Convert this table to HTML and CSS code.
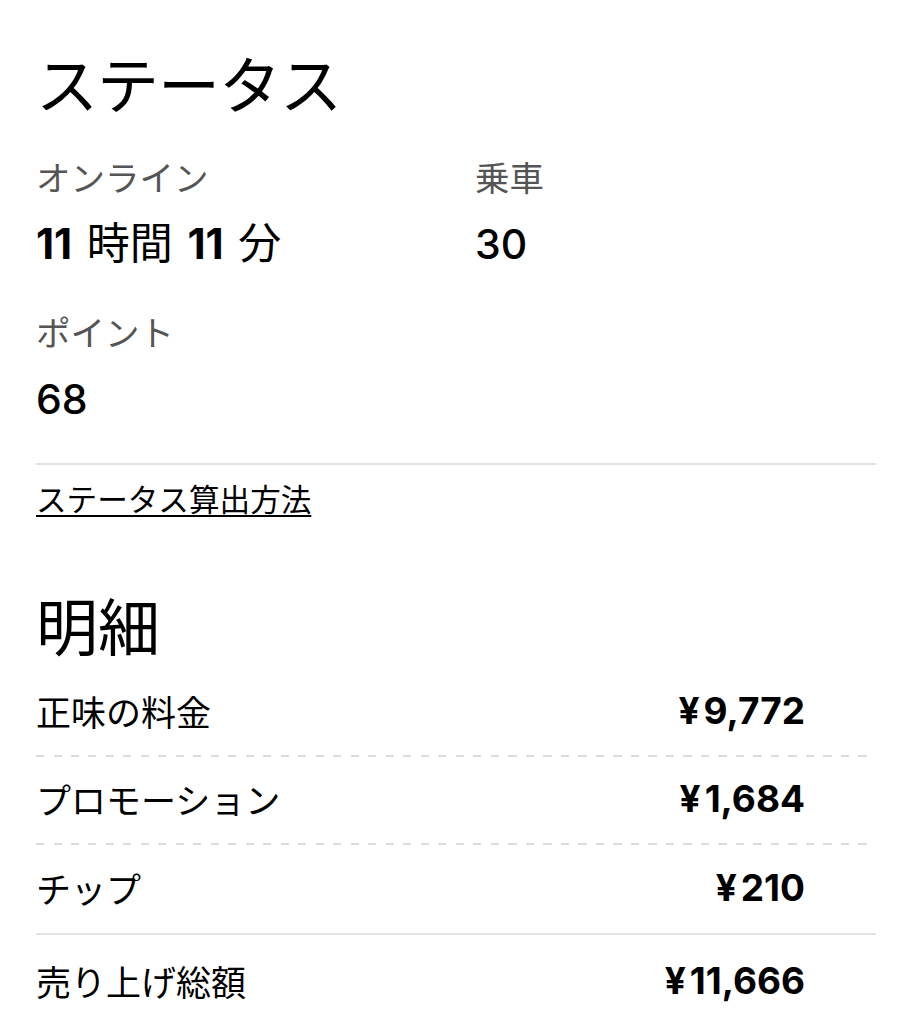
FILE: index.html
```html
<!DOCTYPE html>
<html lang="ja">
<head>
<meta charset="utf-8">
<link rel="stylesheet" href="styles.css">
</head>
<body>
<main class="page">
  <section class="status">
    <h1 class="title">ステータス</h1>
    <div class="stats">
      <div class="stat">
        <div class="label">オンライン</div>
        <div class="value"><span class="num">11</span> 時間 <span class="num">11</span> 分</div>
      </div>
      <div class="stat">
        <div class="label">乗車</div>
        <div class="value"><span class="num light">30</span></div>
      </div>
      <div class="stat">
        <div class="label">ポイント</div>
        <div class="value"><span class="num light">68</span></div>
      </div>
    </div>
    <div class="rule"></div>
    <a class="link" href="#">ステータス算出方法</a>
  </section>
  <section class="details">
    <h1 class="title title2">明細</h1>
    <div class="rows">
      <div class="row"><span class="name">正味の料金</span><span class="amt"><span class="yen">¥</span>9,772</span></div>
      <div class="dash"></div>
      <div class="row"><span class="name">プロモーション</span><span class="amt"><span class="yen">¥</span>1,684</span></div>
      <div class="dash"></div>
      <div class="row tall"><span class="name">チップ</span><span class="amt"><span class="yen">¥</span>210</span></div>
      <div class="rule"></div>
      <div class="row total"><span class="name">売り上げ総額</span><span class="amt"><span class="yen">¥</span>11,666</span></div>
    </div>
  </section>
</main>
</body>
</html>
```

FILE: styles.css
```css
html, body {
  margin: 0;
  padding: 0;
  background: #fff;
}
body {
  font-family: "Noto Sans CJK JP", "Noto Sans", sans-serif;
  color: #000;
}
.page {
  width: 840px;
  padding: 46px 0 0 36px;
}
.title {
  margin: 0;
  font-size: 62px;
  line-height: 72px;
  font-weight: 400;
  letter-spacing: -1px;
}
.stats {
  display: grid;
  grid-template-columns: 439px 1fr;
  row-gap: 40px;
  margin-top: 36px;
}
.label {
  font-size: 34.5px;
  line-height: 44px;
  color: #555;
}
.value {
  margin-top: 17px;
  font-size: 43px;
  line-height: 50px;
  word-spacing: 5px;
}
.num {
  font-family: "Inter", "Noto Sans", sans-serif;
  font-weight: 700;
  font-size: 42px;
}
.num.light {
  font-weight: 500;
  font-size: 41px;
}
.rule {
  height: 2px;
  background: #e2e2e2;
}
.status .rule {
  margin-top: 39px;
}
.link {
  display: inline-block;
  margin-top: 13px;
  font-size: 30.6px;
  line-height: 40px;
  color: #000;
  text-decoration: underline;
  text-decoration-thickness: 2px;
  text-underline-offset: 4px;
}
.details {
  margin-top: 70px;
}
.title2 {
  letter-spacing: 0;
}
.rows {
  margin-top: 9px;
}
.row {
  box-sizing: border-box;
  display: flex;
  justify-content: space-between;
  align-items: center;
  height: 86px;
  padding: 0 71px 4px 0;
  font-size: 35px;
}
.row.tall {
  height: 88px;
}
.row.total {
  height: 90px;
  padding-bottom: 0;
}
.amt {
  font-family: "Inter", "Noto Sans", sans-serif;
  font-weight: 700;
  font-size: 37px;
}
.yen {
  margin-right: 4px;
}
.dash {
  height: 2px;
  width: 836px;
  background: repeating-linear-gradient(90deg, #dcdcdc 0 8px, transparent 8px 17.5px);
}
```
